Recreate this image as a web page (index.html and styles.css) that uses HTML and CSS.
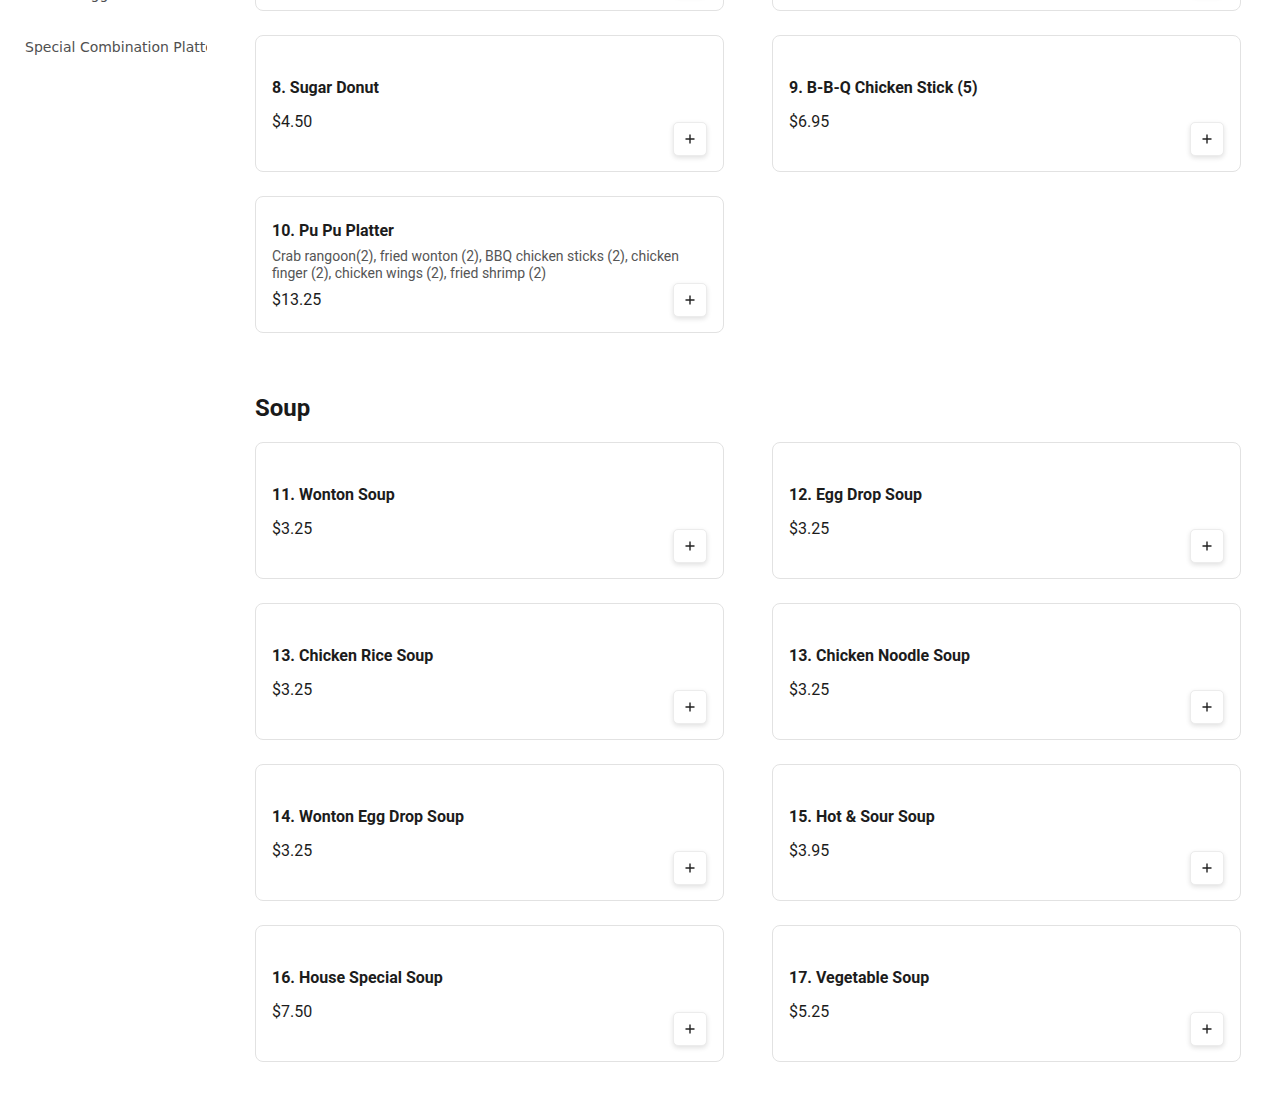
FILE: index.html
```html
<!DOCTYPE html>
<html lang="en">
<head>
<meta charset="utf-8">
<title>Menu</title>
<link rel="stylesheet" href="styles.css">
</head>
<body>
<div class="page">
  <nav class="sidebar">
    <ul class="cat-list">
      <li class="cat">Appetizers</li>
      <li class="cat">Chef's Suggestions</li>
      <li class="cat">Special Combination Platters</li>
    </ul>
  </nav>
  <main class="menu">
    <section class="section">
      <div class="grid">
        <div class="card">
          <div class="item"><div class="item-title">6. Chicken Wings (4)</div><div class="item-price">$6.50</div></div>
          <button class="add"><svg viewBox="0 0 12 12" width="12" height="12"><path d="M6 1.5v9M1.5 6h9" stroke="#222" stroke-width="1.4" fill="none"/></svg></button>
        </div>
        <div class="card">
          <div class="item"><div class="item-title">7. French Fries</div><div class="item-price">$3.50</div></div>
          <button class="add"><svg viewBox="0 0 12 12" width="12" height="12"><path d="M6 1.5v9M1.5 6h9" stroke="#222" stroke-width="1.4" fill="none"/></svg></button>
        </div>
        <div class="card">
          <div class="item"><div class="item-title">8. Sugar Donut</div><div class="item-price">$4.50</div></div>
          <button class="add"><svg viewBox="0 0 12 12" width="12" height="12"><path d="M6 1.5v9M1.5 6h9" stroke="#222" stroke-width="1.4" fill="none"/></svg></button>
        </div>
        <div class="card">
          <div class="item"><div class="item-title">9. B-B-Q Chicken Stick (5)</div><div class="item-price">$6.95</div></div>
          <button class="add"><svg viewBox="0 0 12 12" width="12" height="12"><path d="M6 1.5v9M1.5 6h9" stroke="#222" stroke-width="1.4" fill="none"/></svg></button>
        </div>
        <div class="card">
          <div class="item"><div class="item-title">10. Pu Pu Platter</div><div class="item-desc">Crab rangoon(2), fried wonton (2), BBQ chicken sticks (2), chicken finger (2), chicken wings (2), fried shrimp (2)</div><div class="item-price">$13.25</div></div>
          <button class="add"><svg viewBox="0 0 12 12" width="12" height="12"><path d="M6 1.5v9M1.5 6h9" stroke="#222" stroke-width="1.4" fill="none"/></svg></button>
        </div>
      </div>
    </section>
    <section class="section section-soup">
      <h2 class="section-title">Soup</h2>
      <div class="grid">
        <div class="card">
          <div class="item"><div class="item-title">11. Wonton Soup</div><div class="item-price">$3.25</div></div>
          <button class="add"><svg viewBox="0 0 12 12" width="12" height="12"><path d="M6 1.5v9M1.5 6h9" stroke="#222" stroke-width="1.4" fill="none"/></svg></button>
        </div>
        <div class="card">
          <div class="item"><div class="item-title">12. Egg Drop Soup</div><div class="item-price">$3.25</div></div>
          <button class="add"><svg viewBox="0 0 12 12" width="12" height="12"><path d="M6 1.5v9M1.5 6h9" stroke="#222" stroke-width="1.4" fill="none"/></svg></button>
        </div>
        <div class="card">
          <div class="item"><div class="item-title">13. Chicken Rice Soup</div><div class="item-price">$3.25</div></div>
          <button class="add"><svg viewBox="0 0 12 12" width="12" height="12"><path d="M6 1.5v9M1.5 6h9" stroke="#222" stroke-width="1.4" fill="none"/></svg></button>
        </div>
        <div class="card">
          <div class="item"><div class="item-title">13. Chicken Noodle Soup</div><div class="item-price">$3.25</div></div>
          <button class="add"><svg viewBox="0 0 12 12" width="12" height="12"><path d="M6 1.5v9M1.5 6h9" stroke="#222" stroke-width="1.4" fill="none"/></svg></button>
        </div>
        <div class="card">
          <div class="item"><div class="item-title">14. Wonton Egg Drop Soup</div><div class="item-price">$3.25</div></div>
          <button class="add"><svg viewBox="0 0 12 12" width="12" height="12"><path d="M6 1.5v9M1.5 6h9" stroke="#222" stroke-width="1.4" fill="none"/></svg></button>
        </div>
        <div class="card">
          <div class="item"><div class="item-title">15. Hot &amp; Sour Soup</div><div class="item-price">$3.95</div></div>
          <button class="add"><svg viewBox="0 0 12 12" width="12" height="12"><path d="M6 1.5v9M1.5 6h9" stroke="#222" stroke-width="1.4" fill="none"/></svg></button>
        </div>
        <div class="card">
          <div class="item"><div class="item-title">16. House Special Soup</div><div class="item-price">$7.50</div></div>
          <button class="add"><svg viewBox="0 0 12 12" width="12" height="12"><path d="M6 1.5v9M1.5 6h9" stroke="#222" stroke-width="1.4" fill="none"/></svg></button>
        </div>
        <div class="card">
          <div class="item"><div class="item-title">17. Vegetable Soup</div><div class="item-price">$5.25</div></div>
          <button class="add"><svg viewBox="0 0 12 12" width="12" height="12"><path d="M6 1.5v9M1.5 6h9" stroke="#222" stroke-width="1.4" fill="none"/></svg></button>
        </div>
      </div>
    </section>
  </main>
</div>
</body>
</html>
```

FILE: styles.css
```css
html, body {
  margin: 0;
  padding: 0;
  background: #ffffff;
}

body {
  font-family: Roboto, "Liberation Sans", sans-serif;
  color: #1a1a1a;
  overflow: hidden;
}

.page {
  display: grid;
  grid-template-columns: 182px 986px;
  column-gap: 48px;
  padding-left: 25px;
  margin-top: -126px;
  align-items: start;
}

.sidebar {
  overflow: hidden;
  padding-top: 41px;
}

.cat-list {
  list-style: none;
  margin: 0;
  padding: 0;
}

.cat {
  font-family: "DejaVu Sans", sans-serif;
  font-size: 14px;
  line-height: 21px;
  padding: 16px 0;
  color: #505050;
  white-space: nowrap;
}

.menu {
  display: flex;
  flex-direction: column;
}

.section-soup {
  margin-top: 61px;
}

.section-title {
  margin: 0 0 20px;
  font-size: 24px;
  line-height: 28px;
  font-weight: 700;
  color: #1a1a1a;
}

.grid {
  display: grid;
  grid-template-columns: 1fr 1fr;
  column-gap: 48px;
  row-gap: 24px;
}

.card {
  box-sizing: border-box;
  height: 137px;
  border: 1px solid #e2e2e2;
  border-radius: 8px;
  background: #fff;
  padding: 17px 16px 15px;
  display: grid;
  grid-template-columns: 1fr;
  grid-template-rows: 1fr;
}

.item {
  grid-area: 1 / 1;
  align-self: center;
  display: flex;
  flex-direction: column;
  min-width: 0;
}

.item-title {
  font-size: 16px;
  line-height: 24px;
  font-weight: 700;
  color: #1c1c1c;
}

.item-desc {
  margin: 5px 0 6px;
  font-size: 14px;
  line-height: 17px;
  color: #555;
  padding-right: 24px;
}

.item-price {
  margin-top: 10px;
  font-size: 16px;
  line-height: 24px;
  color: #1c1c1c;
}

.item-desc + .item-price {
  margin-top: 0;
}

.add {
  grid-area: 1 / 1;
  justify-self: end;
  align-self: end;
  box-sizing: border-box;
  width: 34px;
  height: 34px;
  padding: 0;
  border: 1px solid #ececec;
  border-radius: 5px;
  background: #fff;
  box-shadow: 0 2px 5px rgba(0, 0, 0, 0.12);
  display: flex;
  align-items: center;
  justify-content: center;
}

.add svg {
  display: block;
}
```
